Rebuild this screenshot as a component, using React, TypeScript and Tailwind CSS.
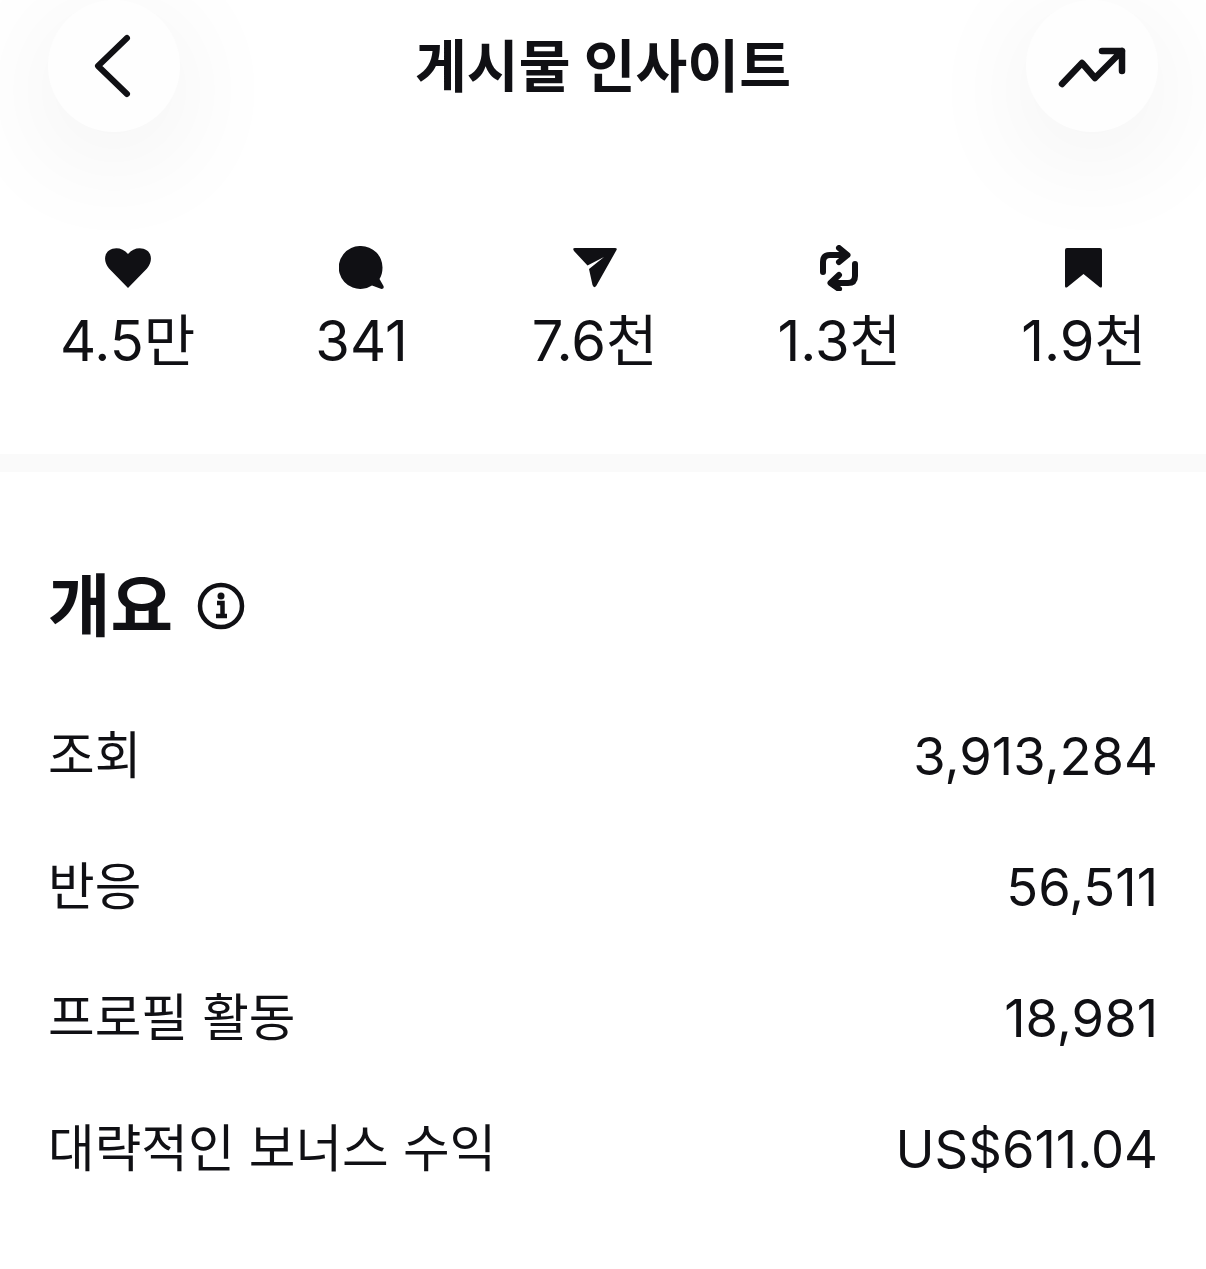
import React from "react";

const font = { fontFamily: 'Inter, "Noto Sans CJK KR", sans-serif' };

function CircleButton({ children }: { children: React.ReactNode }) {
  return (
    <div className="flex h-[132px] w-[132px] items-center justify-center rounded-full bg-[#fefefe] shadow-[0_24px_120px_rgba(0,0,0,0.07)]">
      {children}
    </div>
  );
}

function Stat({ icon, label, className = "" }: { icon: React.ReactNode; label: string; className?: string }) {
  return (
    <div className={`flex flex-col items-center ${className}`}>
      <div className="flex h-[46px] items-center justify-center">{icon}</div>
      <div className="mt-[15px] text-[56px] leading-[70px]">{label}</div>
    </div>
  );
}

function Row({ label, value }: { label: string; value: string }) {
  return (
    <div className="flex h-[131px] items-center justify-between">
      <span className="text-[50.7px] leading-none">{label}</span>
      <span className="text-[52.5px] leading-none">{value}</span>
    </div>
  );
}

const ink = "#101014";

export default function App() {
  return (
    <div className="h-[1269px] w-[1206px] overflow-hidden bg-white text-[#101014]" style={font}>
      <header className="flex h-[132px] items-center justify-between pl-[48px] pr-[48px]">
        <CircleButton>
          <svg width="132" height="132" viewBox="0 0 132 132" fill="none">
            <path d="M79 38 L50 66 L79 94" stroke={ink} strokeWidth="6" strokeLinecap="round" strokeLinejoin="round" />
          </svg>
        </CircleButton>
        <h1 className="mt-[2px] text-[56.3px] font-bold leading-none">게시물 인사이트</h1>
        <CircleButton>
          <svg width="132" height="132" viewBox="0 0 132 132" fill="none">
            <path d="M36 84 L56 63 L69 78 L96 51 M76 51 H96 V71" stroke={ink} strokeWidth="6.5" strokeLinecap="round" strokeLinejoin="round" />
          </svg>
        </CircleButton>
      </header>

      <section className="mt-[113px] flex items-start justify-between pl-[60px] pr-[60px]">
        <Stat
          label="4.5만"
          icon={
            <svg width="46" height="40" viewBox="0 0 46 40">
              <path d="M23 40 L4 20.5 C-1.5 14 -1 6 4 2.5 C10 -1.5 18 0 23 6 C28 0 36 -1.5 42 2.5 C47 6 47.5 14 42 20.5 Z" fill={ink} />
            </svg>
          }
        />
        <Stat
          label="341"
          className="mr-[4px]"
          icon={
            <svg width="46" height="44" viewBox="0 0 46 44">
              <path d="M22 0 A21.5 21.5 0 0 1 43.5 21.5 C43.5 26 42.5 30 40.5 33 L44.5 40 Q45.5 43 42.5 43 L33 39.5 A21.5 21.5 0 1 1 22 0 Z" fill={ink} />
            </svg>
          }
        />
        <Stat
          label="7.6천"
          icon={
            <svg width="44" height="40" viewBox="0 0 44 40">
              <path d="M2 0 H42 Q44.5 0 43.5 2 L23.5 37.5 Q21 41 19.5 37 L16 21 L31 9 L14.5 17.5 L1 3 Q-1 0 2 0 Z" fill={ink} />
            </svg>
          }
        />
        <Stat
          label="1.3천"
          icon={
            <svg width="40" height="46" viewBox="0 0 40 46" fill="none">
              <path d="M4 27 V17 Q4 10 11 10 H28 M20 3 L28.5 10 L20 17 M36 19 V31 Q36 38 29 38 H12 M20 30 L11.5 38 L20 44" stroke={ink} strokeWidth="6" strokeLinecap="round" strokeLinejoin="round" />
            </svg>
          }
        />
        <Stat
          label="1.9천"
          icon={
            <svg width="37" height="40" viewBox="0 0 37 40">
              <path d="M2 0 H35 Q37 0 37 2 V38 Q37 40.5 34.5 39 L18.5 26 L2.5 39 Q0 40.5 0 38 V2 Q0 0 2 0 Z" fill={ink} />
            </svg>
          }
        />
      </section>

      <div className="mt-[78px] h-[18px] bg-[#fafafa]" />

      <main className="px-[48px]">
        <div className="mt-[96px] flex items-center gap-[24px]">
          <h2 className="text-[68px] font-bold leading-[76px]">개요</h2>
          <svg width="48" height="48" viewBox="0 0 48 48" fill="none">
            <circle cx="24" cy="24" r="21" stroke={ink} strokeWidth="4.5" />
            <circle cx="24" cy="14" r="3.5" fill={ink} />
            <path d="M20 21 H25.5 V33 M19 34 H30" stroke={ink} strokeWidth="4.5" />
          </svg>
        </div>
        <div className="mt-[47px]">
          <Row label="조회" value="3,913,284" />
          <Row label="반응" value="56,511" />
          <Row label="프로필 활동" value="18,981" />
          <Row label="대략적인 보너스 수익" value="US$611.04" />
        </div>
      </main>
    </div>
  );
}
